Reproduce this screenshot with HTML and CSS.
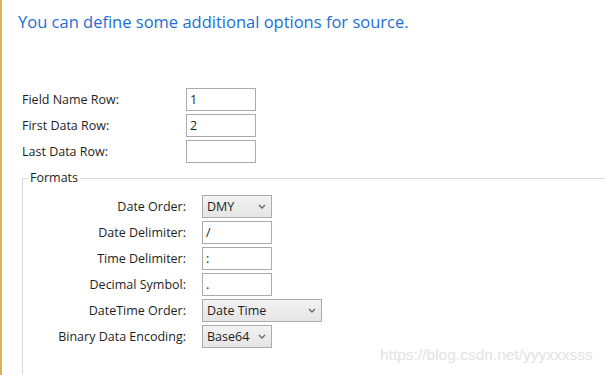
FILE: index.html
```html
<!DOCTYPE html>
<html lang="en">
<head>
    <meta charset="UTF-8">
    <title>Source Options</title>
    <link rel="stylesheet" href="styles.css">
</head>
<body>
    <div class="page">
        <h1 class="titulo">You can define some additional options for source.</h1>

        <div class="linhas">
            <label>Field Name Row:</label>
            <input type="text" class="campo" value="1">
            <label>First Data Row:</label>
            <input type="text" class="campo" value="2">
            <label>Last Data Row:</label>
            <input type="text" class="campo" value="">
        </div>

        <fieldset class="formatos">
            <legend>Formats</legend>
            <div class="grade">
                <label>Date Order:</label>
                <div class="caixa curta">
                    <select><option>DMY</option></select>
                    <svg class="seta" width="8" height="5" viewBox="0 0 8 5"><path d="M1 1 L4 4 L7 1" fill="none" stroke="#6a6a6a" stroke-width="1.4"/></svg>
                </div>

                <label>Date Delimiter:</label>
                <input type="text" class="campo" value="/">

                <label>Time Delimiter:</label>
                <input type="text" class="campo" value=":">

                <label>Decimal Symbol:</label>
                <input type="text" class="campo" value=".">

                <label>DateTime Order:</label>
                <div class="caixa longa">
                    <select><option>Date Time</option></select>
                    <svg class="seta" width="8" height="5" viewBox="0 0 8 5"><path d="M1 1 L4 4 L7 1" fill="none" stroke="#6a6a6a" stroke-width="1.4"/></svg>
                </div>

                <label>Binary Data Encoding:</label>
                <div class="caixa curta">
                    <select><option>Base64</option></select>
                    <svg class="seta" width="8" height="5" viewBox="0 0 8 5"><path d="M1 1 L4 4 L7 1" fill="none" stroke="#6a6a6a" stroke-width="1.4"/></svg>
                </div>
            </div>
        </fieldset>

        <div class="marca">https://blog.csdn.net/yyyxxxsss</div>
    </div>
</body>
</html>
```

FILE: styles.css
```css
body {
    margin: 0;
    padding: 0;
    background-color: #ffffff;
    font-family: "Open Sans", "Noto Sans", sans-serif;
    color: #1e1e1e;
    overflow: hidden;
}

.page {
    position: relative;
    height: 375px;
    border-left: 2px solid #d8b35f;
    overflow: hidden;
}

.titulo {
    margin: 0;
    padding: 12px 0 0 16px;
    font-size: 16.5px;
    line-height: 20px;
    font-weight: normal;
    color: #1c6fd4;
}

.linhas {
    display: grid;
    grid-template-columns: 164px 70px;
    row-gap: 3px;
    margin: 56px 0 0 20px;
    font-size: 12.5px;
    align-items: center;
}

.campo {
    box-sizing: border-box;
    width: 70px;
    height: 23px;
    margin: 0;
    padding: 0 3px;
    border: 1px solid #ababab;
    font-family: inherit;
    font-size: 12.5px;
    color: #1e1e1e;
    outline: none;
}

.formatos {
    margin: 7px 0 0 20px;
    padding: 9px 0 0 5px;
    height: 300px;
    border: 1px solid #dadada;
    border-right: none;
    border-bottom: none;
    min-width: 0;
}

.formatos legend {
    padding: 0 2px;
    font-size: 12.5px;
    line-height: 16px;
}

.grade {
    display: grid;
    grid-template-columns: 158px auto;
    column-gap: 16px;
    row-gap: 3px;
    justify-content: start;
    align-items: center;
    font-size: 12.5px;
}

.grade label {
    text-align: right;
}

.caixa {
    position: relative;
    height: 23px;
}

.curta {
    width: 70px;
}

.longa {
    width: 120px;
}

.caixa select {
    appearance: none;
    -webkit-appearance: none;
    box-sizing: border-box;
    width: 100%;
    height: 23px;
    margin: 0;
    padding: 0 0 0 4px;
    border: 1px solid #acacac;
    border-radius: 0;
    background: linear-gradient(#f2f2f2, #e5e5e5);
    font-family: inherit;
    font-size: 12.5px;
    color: #1e1e1e;
}

.seta {
    position: absolute;
    right: 6px;
    top: 9px;
    pointer-events: none;
}

.marca {
    position: absolute;
    left: 378px;
    top: 346px;
    font-family: "Liberation Sans", Arial, sans-serif;
    font-size: 15.5px;
    color: #e2e2e2;
}
```
